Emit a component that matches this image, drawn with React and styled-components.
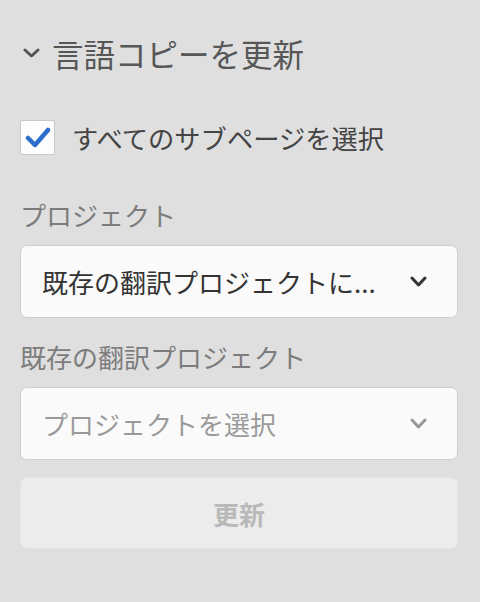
import React from "react";
import styled, { createGlobalStyle } from "styled-components";

const GlobalStyle = createGlobalStyle`
  html, body {
    margin: 0;
    padding: 0;
    background: #dfdfdf;
  }
  body {
    font-family: "Noto Sans CJK JP", "Noto Sans", sans-serif;
    width: 480px;
    height: 602px;
    overflow: hidden;
  }
`;

const Panel = styled.div`
  padding: 30px 22px 0 20px;
  display: flex;
  flex-direction: column;
`;

const Heading = styled.div`
  display: flex;
  align-items: center;
  gap: 12px;
  color: #575757;
  font-size: 31.5px;
  line-height: 46px;
  padding-left: 3px;
  margin-bottom: 43px;
`;

const CheckRow = styled.label`
  display: flex;
  align-items: center;
  gap: 17px;
  font-size: 26.3px;
  color: #444;
  height: 36px;
  margin-bottom: 42px;
`;

const Box = styled.span`
  width: 35px;
  height: 35px;
  box-sizing: border-box;
  background: #fdfdfd;
  border: 1px solid #c8c8c8;
  border-radius: 2px;
  display: flex;
  align-items: center;
  justify-content: center;
`;

const Label = styled.div`
  font-size: 26px;
  line-height: 36px;
  color: #7c7c7c;
  margin-bottom: 12px;
`;

const Select = styled.div`
  height: 73px;
  box-sizing: border-box;
  background: #fafafa;
  border: 1px solid #cfcfcf;
  border-radius: 7px;
  display: flex;
  align-items: center;
  justify-content: space-between;
  padding: 0 30px 0 21px;
  font-size: 26px;
  color: ${p => (p.placeholder ? "#9a9a9a" : "#333")};
  margin-bottom: ${p => p.mb || 0}px;
`;

const Button = styled.div`
  height: 72px;
  box-sizing: border-box;
  background: #ececec;
  border: 1px solid #e4e4e4;
  border-radius: 7px;
  display: flex;
  align-items: center;
  justify-content: center;
  font-size: 26px;
  font-weight: bold;
  color: #b9b9b9;
`;

const Chevron = ({ color, w = 15, h = 9, sw = 3 }) => (
  <svg width={w + 2} height={h + 2} viewBox={`-1 -1 ${w + 2} ${h + 2}`}>
    <polyline
      points={`1,1 ${w / 2},${h - 1} ${w - 1},1`}
      fill="none"
      stroke={color}
      strokeWidth={sw}
      strokeLinecap="round"
      strokeLinejoin="round"
    />
  </svg>
);

export default function App() {
  return (
    <>
      <GlobalStyle />
      <Panel>
        <Heading>
          <Chevron color="#555" w={15} h={8} sw={3} />
          <span>言語コピーを更新</span>
        </Heading>
        <CheckRow>
          <Box>
            <svg width="26" height="22" viewBox="0 0 26 22">
              <polyline
                points="3,12 10,19 23,4"
                fill="none"
                stroke="#2b6ecb"
                strokeWidth="4.5"
                strokeLinecap="round"
                strokeLinejoin="round"
              />
            </svg>
          </Box>
          <span>すべてのサブページを選択</span>
        </CheckRow>
        <Label>プロジェクト</Label>
        <Select mb={21}>
          <span>既存の翻訳プロジェクトに...</span>
          <Chevron color="#333" />
        </Select>
        <Label>既存の翻訳プロジェクト</Label>
        <Select placeholder="1" mb={17}>
          <span>プロジェクトを選択</span>
          <Chevron color="#999" />
        </Select>
        <Button>更新</Button>
      </Panel>
    </>
  );
}
